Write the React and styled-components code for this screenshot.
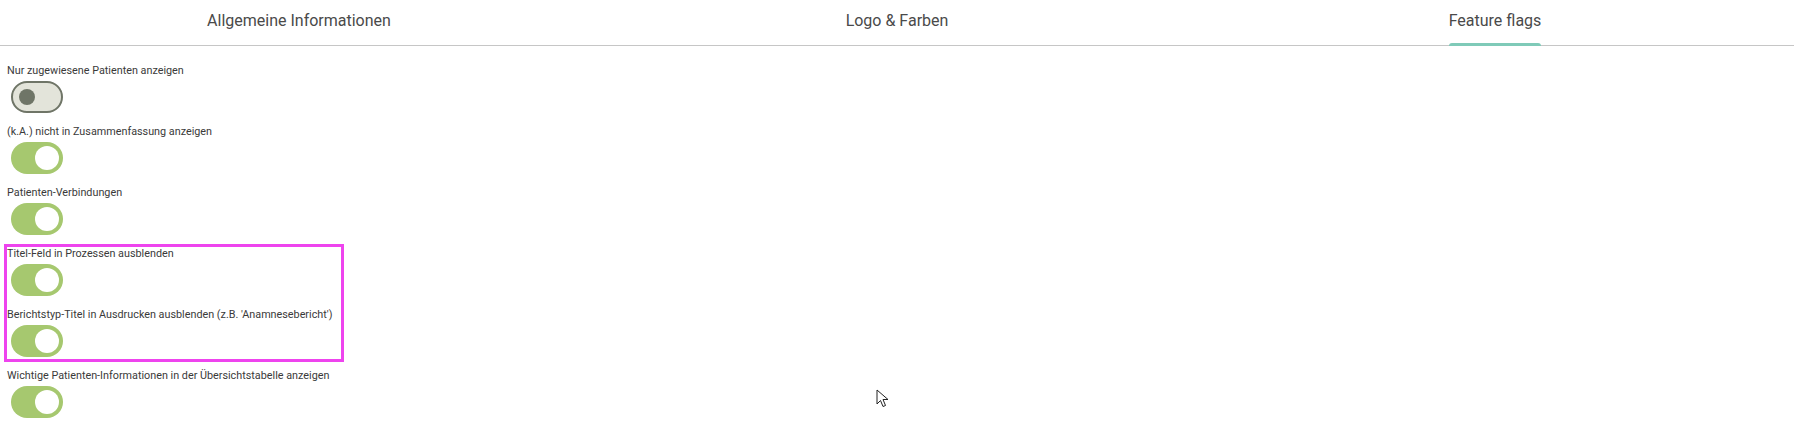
import React from "react";
import styled, { createGlobalStyle } from "styled-components";

const Global = createGlobalStyle`
  html, body { margin: 0; padding: 0; background: #fff; }
  body { font-family: Roboto, "Noto Sans", "Liberation Sans", sans-serif; }
`;

const Page = styled.div`
  position: relative;
  width: 1794px;
  height: 429px;
  overflow: hidden;
  background: #fff;
`;

const TabBar = styled.div`
  display: grid;
  grid-template-columns: repeat(3, 1fr);
  height: 45px;
  border-bottom: 1px solid #c6c6c6;
`;

const Tab = styled.div`
  display: flex;
  justify-content: center;
  align-items: stretch;
`;

const TabLabel = styled.span`
  position: relative;
  display: flex;
  align-items: center;
  padding-bottom: 4px;
  font-size: 16px;
  color: #4a4a4a;
  &::after {
    content: "";
    display: ${(p) => (p.$active ? "block" : "none")};
    position: absolute;
    left: 0;
    right: 0;
    bottom: -1px;
    height: 3px;
    border-radius: 3px 3px 0 0;
    background: #7fcab8;
  }
`;

const Content = styled.div`
  display: flex;
  flex-direction: column;
  gap: 11px;
  padding: 17px 0 0 7px;
`;

const Row = styled.div`
  display: flex;
  flex-direction: column;
  align-items: flex-start;
  gap: 2px;
`;

const Label = styled.div`
  font-size: 10.8px;
  line-height: 16px;
  color: #3a3a3a;
`;

const Track = styled.div`
  box-sizing: border-box;
  width: 52px;
  height: 32px;
  margin-left: 4px;
  border-radius: 16px;
  display: flex;
  align-items: center;
  justify-content: ${(p) => (p.$on ? "flex-end" : "flex-start")};
  padding: ${(p) => (p.$on ? "0 4px" : "0 6px")};
  background: ${(p) => (p.$on ? "#a6c86f" : "#e3e4da")};
  border: ${(p) => (p.$on ? "none" : "2px solid #6f7567")};
`;

const Thumb = styled.div`
  width: ${(p) => (p.$on ? "24px" : "16px")};
  height: ${(p) => (p.$on ? "24px" : "16px")};
  border-radius: 50%;
  background: ${(p) => (p.$on ? "#ffffff" : "#6f7567")};
`;

const Highlight = styled.div`
  position: absolute;
  left: 4px;
  top: 244px;
  width: 340px;
  height: 118px;
  box-sizing: border-box;
  border: 3px solid #ee44ee;
  pointer-events: none;
`;

const Cursor = styled.svg`
  position: absolute;
  left: 876px;
  top: 389px;
`;

const flags = [
  { label: "Nur zugewiesene Patienten anzeigen", on: false },
  { label: "(k.A.) nicht in Zusammenfassung anzeigen", on: true },
  { label: "Patienten-Verbindungen", on: true },
  { label: "Titel-Feld in Prozessen ausblenden", on: true },
  { label: "Berichtstyp-Titel in Ausdrucken ausblenden (z.B. 'Anamnesebericht')", on: true },
  { label: "Wichtige Patienten-Informationen in der Übersichtstabelle anzeigen", on: true },
];

const tabs = ["Allgemeine Informationen", "Logo & Farben", "Feature flags"];

export default function App() {
  return (
    <Page>
      <Global />
      <TabBar>
        {tabs.map((t, i) => (
          <Tab key={t}>
            <TabLabel $active={i === 2}>{t}</TabLabel>
          </Tab>
        ))}
      </TabBar>
      <Content>
        {flags.map((f) => (
          <Row key={f.label}>
            <Label>{f.label}</Label>
            <Track $on={f.on}>
              <Thumb $on={f.on} />
            </Track>
          </Row>
        ))}
      </Content>
      <Highlight />
      <Cursor width="14" height="20" viewBox="0 0 14 20">
        <path
          d="M1 1 L1 15 L4.5 11.5 L7 17.5 L9.5 16.5 L7 10.5 L12 10.5 Z"
          fill="#fff"
          stroke="#222"
          strokeWidth="1"
          strokeLinejoin="round"
        />
      </Cursor>
    </Page>
  );
}
